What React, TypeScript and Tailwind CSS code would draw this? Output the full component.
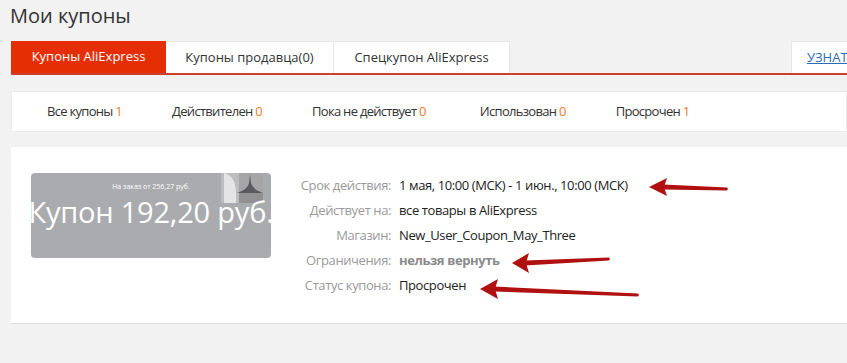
const font = { fontFamily: '"Open Sans", "Noto Sans", sans-serif' };

const filters = [
  { label: 'Все купоны', count: 1 },
  { label: 'Действителен', count: 0 },
  { label: 'Пока не действует', count: 0 },
  { label: 'Использован', count: 0 },
  { label: 'Просрочен', count: 1 },
];

const details: Array<{ label: string; value: string; muted?: boolean }> = [
  { label: 'Срок действия:', value: '1 мая, 10:00 (МСК) - 1 июн., 10:00 (МСК)' },
  { label: 'Действует на:', value: 'все товары в AliExpress' },
  { label: 'Магазин:', value: 'New_User_Coupon_May_Three' },
  { label: 'Ограничения:', value: 'нельзя вернуть', muted: true },
  { label: 'Статус купона:', value: 'Просрочен' },
];

function Arrow({ tip, back, halfHead, tail }: { tip: [number, number]; back: [number, number]; halfHead: number; tail: [number, number] }) {
  const [tx, ty] = tip;
  const [bx, by] = back;
  const [ex, ey] = tail;
  return (
    <g fill="#b01010">
      <polygon points={`${tx},${ty} ${bx},${by - halfHead} ${bx - 3},${by} ${bx},${by + halfHead}`} />
      <polygon points={`${bx - 4},${by - 2.5} ${ex},${ey - 1.5} ${ex + 1},${ey} ${ex},${ey + 1.5} ${bx - 4},${by + 2.5}`} />
    </g>
  );
}

export default function App() {
  return (
    <div className="relative w-[847px] h-[363px] overflow-hidden bg-[#f2f2f2] text-[#333]" style={font}>
      <div className="pl-[10px] pt-[2px]">
        <h1 className="text-[20px] leading-[28px] text-[#333] font-normal">Мои купоны</h1>
      </div>

      <div className="ml-[11px] mt-[11px] flex items-stretch h-[34px] border-b-2 border-[#c9412a]">
        <div className="w-[155px] bg-[#e62e04] text-white text-[13px] flex items-center justify-center">Купоны AliExpress</div>
        <div className="w-[168px] bg-white border-t border-r border-[#e6e6e6] text-[13px] text-[#333] flex items-center justify-center">Купоны продавца(0)</div>
        <div className="w-[176px] bg-white border-t border-r border-[#e6e6e6] text-[13px] text-[#333] flex items-center justify-center">Спецкупон AliExpress</div>
        <div className="flex-1" />
        <div className="w-[56px] bg-white border-t border-l border-[#e6e6e6] text-[13px] flex items-center pl-[15px] whitespace-nowrap overflow-hidden">
          <span className="text-[#2a6bb5] underline">УЗНАТЬ</span>
        </div>
      </div>

      <div className="ml-[11px] mt-[16px] h-[41px] bg-white border border-[#ebebeb] flex items-center pl-[35px] gap-[50px] text-[13px] tracking-[-0.7px] text-[#333]">
        {filters.map((f, i) => (
          <span key={f.label} className={i === 3 ? 'ml-[4px]' : ''}>
            {f.label} <span className="text-[#f07a2a]">{f.count}</span>
          </span>
        ))}
      </div>

      <div className="ml-[11px] mt-[15px] h-[177px] bg-white border-b border-[#dcdcdc] flex pl-[20px] pt-[26px]">
        <div className="relative w-[240px] h-[85px] rounded-[4px] bg-[#aaabaf] overflow-hidden flex flex-col items-center text-white">
          <svg className="absolute right-[8px] top-0" width="42" height="30" viewBox="0 0 42 30">
            <rect x="0" y="0" width="18" height="30" fill="#bdbdbf" />
            <path d="M3 0 C11 2 15 9 15 20 L15 30 L3 30 Z" fill="#e4e4e4" />
            <path d="M18 0 L42 0 L42 30 L18 30 Z" fill="#a6a6a9" />
            <path d="M29 1 L30 10 C32 16 37 18 42 20 L16 20 C22 18 27 15 28 10 Z" fill="#5a5a5e" />
            <path d="M18 20 L42 20 L42 30 L18 30 Z" fill="#919194" />
          </svg>
          <div className="relative mt-[9px] text-[7px] leading-[9px]">На заказ от 256,27 руб.</div>
          <div className="relative mt-[3px] text-[29px] leading-[36px] tracking-[-0.2px] whitespace-nowrap">Купон 192,20 руб.</div>
        </div>

        <div className="ml-[20px] flex flex-col text-[13px] tracking-[-0.4px]">
          {details.map((d) => (
            <div key={d.label} className="flex h-[25px] items-center">
              <span className="w-[100px] text-right text-[#9a9a9a] whitespace-nowrap">{d.label}</span>
              <span className={`ml-[8px] whitespace-nowrap ${d.muted ? 'font-bold text-[#8a8a8a]' : 'text-[#222]'}`}>{d.value}</span>
            </div>
          ))}
        </div>
      </div>

      <svg className="absolute left-0 top-0 pointer-events-none" width="847" height="363" viewBox="0 0 847 363">
        <Arrow tip={[649, 187]} back={[667, 187]} halfHead={9} tail={[727, 189]} />
        <Arrow tip={[512, 263]} back={[529, 263]} halfHead={10} tail={[609, 259]} />
        <Arrow tip={[480, 289]} back={[498, 289]} halfHead={10} tail={[638, 295]} />
      </svg>
    </div>
  );
}
